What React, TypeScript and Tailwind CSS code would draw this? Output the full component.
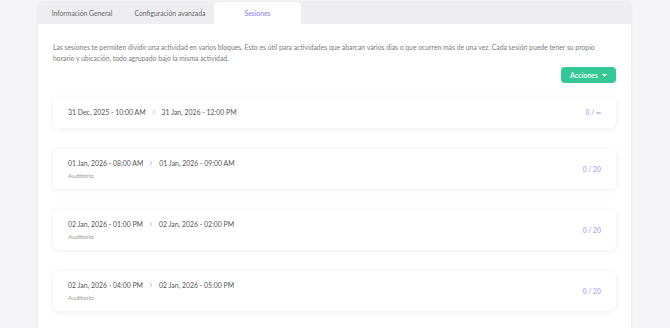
import React from "react";

const sessions = [
  { start: "31 Dec, 2025 - 10:00 AM", end: "31 Jan, 2026 - 12:00 PM", loc: "", count: "0 / ∞" },
  { start: "01 Jan, 2026 - 08:00 AM", end: "01 Jan, 2026 - 09:00 AM", loc: "Auditorio", count: "0 / 20" },
  { start: "02 Jan, 2026 - 01:00 PM", end: "02 Jan, 2026 - 02:00 PM", loc: "Auditorio", count: "0 / 20" },
  { start: "02 Jan, 2026 - 04:00 PM", end: "02 Jan, 2026 - 05:00 PM", loc: "Auditorio", count: "0 / 20" },
];

function Chevron() {
  return (
    <svg width="6" height="6" viewBox="0 0 6 6" className="mx-[5px]">
      <path d="M2 1 L4 3 L2 5" fill="none" stroke="#c3b9f7" strokeWidth="0.9" strokeLinecap="round" strokeLinejoin="round" />
    </svg>
  );
}

export default function App() {
  return (
    <div className="w-[670px] h-[328px] overflow-hidden bg-[#f5f5f8] pl-[38px] pt-[2px]" style={{ fontFamily: "Lato, 'Noto Sans', sans-serif" }}>
      <div className="w-[593px] h-[400px] bg-white rounded-t-[4px] shadow-[0_0_3px_rgba(0,0,0,0.08)]">
        <div className="flex h-[22px] bg-[#eeeef0] rounded-t-[4px]">
          <div className="w-[88px] flex items-center justify-center text-[6.8px] text-[#666]">Información General</div>
          <div className="w-[88px] flex items-center justify-center text-[6.8px] text-[#666]">Configuración avanzada</div>
          <div className="w-[87px] flex items-center justify-center text-[6.8px] text-[#8b7cf2] bg-white rounded-t-[5px]">Sesiones</div>
        </div>
        <div className="px-[15px] pt-[18px]">
          <p className="text-[6.8px] leading-[10.5px] text-[#7a7a7a] pr-[18px]">
            Las sesiones te permiten dividir una actividad en varios bloques. Esto es útil para actividades que abarcan varios días o que ocurren más de una vez. Cada sesión puede tener su propio horario y ubicación, todo agrupado bajo la misma actividad.
          </p>
          <div className="flex justify-end mt-[4px]">
            <button className="h-[16px] w-[55px] rounded-[4px] bg-[#34c896] text-white text-[7px] font-semibold flex items-center justify-center gap-[4px]">
              Acciones
              <svg width="5" height="3" viewBox="0 0 5 3"><path d="M0 0 H5 L2.5 3 Z" fill="white" /></svg>
            </button>
          </div>
          <div className="flex flex-col gap-[21px] mt-[14px]">
            {sessions.map((s, i) => (
              <div key={i} className={`flex items-center justify-between px-[15px] bg-white rounded-[6px] shadow-[0_1px_6px_rgba(0,0,0,0.08)] ${s.loc ? "h-[40px]" : "h-[31px]"}`}>
                <div className="flex flex-col">
                  <div className="flex items-center text-[6.9px] text-[#555]">
                    <span>{s.start}</span>
                    <Chevron />
                    <span>{s.end}</span>
                  </div>
                  {s.loc && <div className="text-[6.3px] text-[#999] mt-[3px]">{s.loc}</div>}
                </div>
                <div className="text-[6.8px] font-semibold text-[#b0a5f7]">{s.count}</div>
              </div>
            ))}
          </div>
        </div>
      </div>
    </div>
  );
}
